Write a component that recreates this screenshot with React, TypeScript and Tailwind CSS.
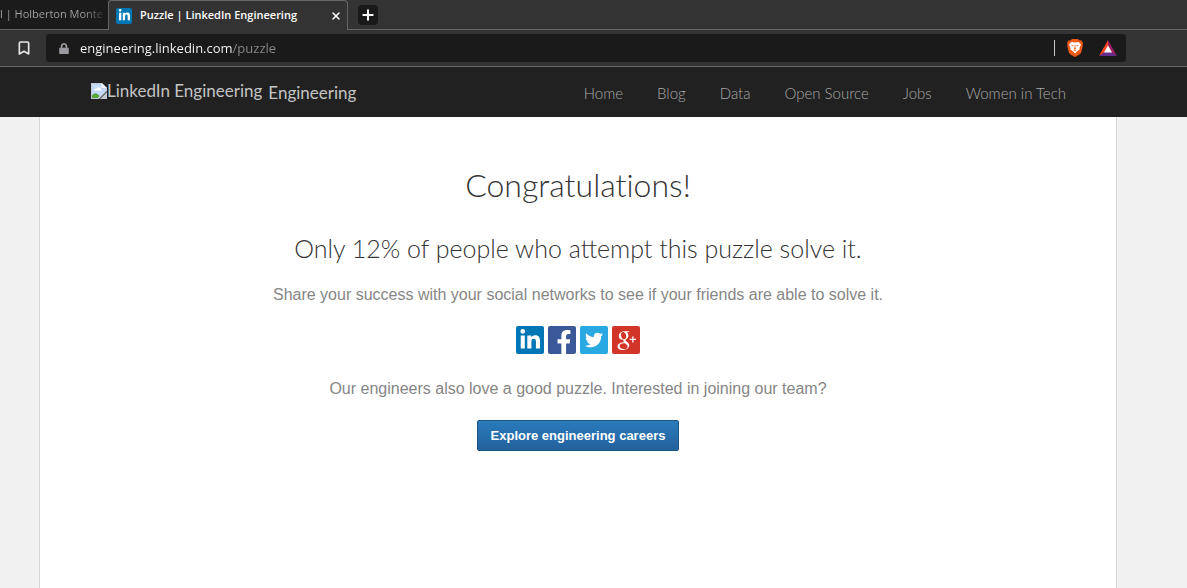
import React from "react";
import { Bookmark, Plus, X } from "lucide-react";
import { FaFacebookF, FaLinkedinIn, FaLock, FaTwitter } from "react-icons/fa";
import { TiSocialGooglePlus } from "react-icons/ti";

const navItems = ["Home", "Blog", "Data", "Open Source", "Jobs", "Women in Tech"];

function LinkedInMark({ className }: { className: string }) {
  return (
    <span className={`flex items-center justify-center bg-[#0077b5] text-white ${className}`}>
      <FaLinkedinIn className="size-4/5" />
    </span>
  );
}

function BrokenImage() {
  return (
    <svg viewBox="0 0 16 16" className="size-4 shrink-0" aria-hidden="true">
      <path d="M0 0h11l5 5v3L8 16H0z" fill="#c3c9d3" />
      <path d="M1 1h9.500v4.500H15v2L7.500 15H1z" fill="#c4d8fb" />
      <path d="M3 7.500a2 2 0 0 1 2.500-2 2.500 2.500 0 0 1 4.500 2z" fill="#fff" />
      <path d="M1 15v-2.500C3 9.500 6 9.500 8.500 13L7 15z" fill="#57a639" />
      <path d="M10.500 0v5H16z" fill="#f5f7fa" />
      <path d="M16 9v7H9z" fill="#c3c9d3" />
    </svg>
  );
}

function BraveShield() {
  return (
    <svg viewBox="0 0 16 18" className="h-[18px] w-4" aria-hidden="true">
      <path d="M5 0h6l1.500 1.500 1.800-.2L16 4l-.5 2 .3 1-1.800 7-2.200 2L8 18l-3.800-2L2 14 .2 7l.3-1L0 4l1.700-2.700 1.800.2z" fill="#ee5a16" />
      <path d="M4.500 3 8 3.500l3.500-.5L14 5.500 12.500 9l.2 1.500-2 1.300L8 14.500l-2.700-2.700-2-1.300.2-1.500L2 5.500z" fill="#fff" />
      <path d="m4 6 2.600.4-.8 1.100zM12 6l-2.600.4.8 1.100zM7.600 6h.8l.1 3 .8.900-1.300.8-1.300-.8.8-.9zM6.300 11.800l1.700-.6 1.700.6-1.700.5z" fill="#ee5a16" />
    </svg>
  );
}

function RewardsTriangle() {
  return (
    <svg viewBox="0 0 18 16" className="h-4 w-[18px]" aria-hidden="true">
      <path d="M9 0 0 16l9-6z" fill="#ff4724" />
      <path d="M9 0v10l9 6z" fill="#9e1f63" />
      <path d="m0 16 9-6 9 6z" fill="#662d91" />
      <path d="m9 5.500 4 7H5z" fill="#fff" />
    </svg>
  );
}

function TabStrip() {
  return (
    <div className="flex h-[30px] bg-[#333333] font-['Open_Sans',sans-serif] text-[11px]">
      <button type="button" className="flex w-[108px] items-center whitespace-nowrap border-b border-[#666666] bg-[#1b1b1b]">
        <span className="bg-[linear-gradient(90deg,#a5a5a5_80%,#3a3a3a)] bg-clip-text text-transparent">l | Holberton Monte</span>
      </button>
      <div className="flex w-60 items-center rounded-t border-x border-t border-[#666666] pl-[7px] pr-[3px]">
        <LinkedInMark className="size-4 rounded-xs" />
        <span className="flex-1 whitespace-nowrap pl-2 font-semibold text-white">Puzzle | LinkedIn Engineering</span>
        <button type="button" aria-label="Close tab" className="p-0.5 text-white">
          <X className="size-3" strokeWidth={3} />
        </button>
      </div>
      <div className="flex flex-1 items-center border-b border-[#666666] pl-2.5">
        <button type="button" aria-label="New tab" className="flex size-5 items-center justify-center rounded bg-[#1a1a1a] text-white">
          <Plus className="size-4" strokeWidth={3} />
        </button>
      </div>
    </div>
  );
}

function Toolbar() {
  return (
    <div className="flex h-[37px] items-center border-b border-[#666666] bg-[#333333] pl-4 pr-[61px]">
      <button type="button" aria-label="Bookmark" className="mr-3.5 text-[#e6e6e6]">
        <Bookmark className="size-4" strokeWidth={2.5} />
      </button>
      <div className="flex h-7 flex-1 items-center rounded bg-[#1a1a1a] pl-3 pr-[9px]">
        <FaLock className="h-[11px] w-3 text-[#9a9aa0]" aria-hidden="true" />
        <input
          type="text"
          aria-label="Address"
          defaultValue="engineering.linkedin.com/puzzle"
          className="ml-2.5 min-w-0 flex-1 bg-[linear-gradient(90deg,#ffffff_153px,#8a8a8a_153px)] bg-clip-text pt-0.5 font-['Open_Sans',sans-serif] text-[13px] text-transparent outline-none"
        />
        <span className="mr-3 h-4 w-px bg-[#c8c8c8]" />
        <button type="button" aria-label="Shields"><BraveShield /></button>
        <button type="button" aria-label="Rewards" className="ml-4"><RewardsTriangle /></button>
      </div>
    </div>
  );
}

function SiteHeader() {
  return (
    <header className="flex h-[50px] items-center justify-between bg-[#212121] pl-[91px] pr-[121px] pt-0.5 font-['Lato',sans-serif]">
      <a href="#home" className="flex items-center text-[17px] text-[#c4c4c4]">
        <span className="flex items-center pb-1">
          <BrokenImage />
          LinkedIn Engineering
        </span>
        <span className="ml-1.5">Engineering</span>
      </a>
      <nav className="flex gap-[34px] text-[15px] font-light text-[#a8a8a8]">
        {navItems.map((item) => (
          <a key={item} href="#nav" className="whitespace-nowrap">{item}</a>
        ))}
      </nav>
    </header>
  );
}

function ShareLinks() {
  return (
    <div className="mt-[19px] flex justify-center gap-1 text-white">
      <a href="#linkedin" aria-label="Share on LinkedIn">
        <LinkedInMark className="size-7 rounded-xs" />
      </a>
      <a href="#facebook" aria-label="Share on Facebook" className="flex size-7 items-end justify-end overflow-hidden rounded-xs bg-[#3b5998] pr-1">
        <FaFacebookF className="h-6 w-4" />
      </a>
      <a href="#twitter" aria-label="Share on Twitter" className="flex size-7 items-center justify-center rounded-xs bg-[#29a9e1]">
        <FaTwitter className="size-[18px]" />
      </a>
      <a href="#google-plus" aria-label="Share on Google+" className="flex size-7 items-center justify-center rounded-xs bg-[#d23427]">
        <TiSocialGooglePlus className="size-[30px] shrink-0" />
      </a>
    </div>
  );
}

export default function App() {
  return (
    <div className="flex min-h-screen flex-col bg-[#f1f1f1]">
      <TabStrip />
      <Toolbar />
      <SiteHeader />
      <main className="ml-[39px] mr-[70px] flex-1 border-x border-[#d8d8d8] bg-white pt-12 text-center font-['Liberation_Sans',sans-serif] text-base text-[#868686]">
        <h1 className="font-['Lato',sans-serif] text-[32px] font-light leading-10 text-[#333333] [font-variant-ligatures:none]">Congratulations!</h1>
        <h2 className="mt-[27px] font-['Lato',sans-serif] text-[25px] font-light leading-8 text-[#333333]">
          Only 12% of people who attempt this puzzle solve it.
        </h2>
        <p className="mt-[19px]">Share your success with your social networks to see if your friends are able to solve it.</p>
        <ShareLinks />
        <p className="mt-[23px]">Our engineers also love a good puzzle. Interested in joining our team?</p>
        <button type="button" className="mt-[19px] h-[31px] rounded-xs border border-[#1b5480] bg-linear-to-b from-[#2a7bbd] to-[#23619c] px-[13px] text-[13px] font-bold text-white">
          Explore engineering careers
        </button>
      </main>
    </div>
  );
}
